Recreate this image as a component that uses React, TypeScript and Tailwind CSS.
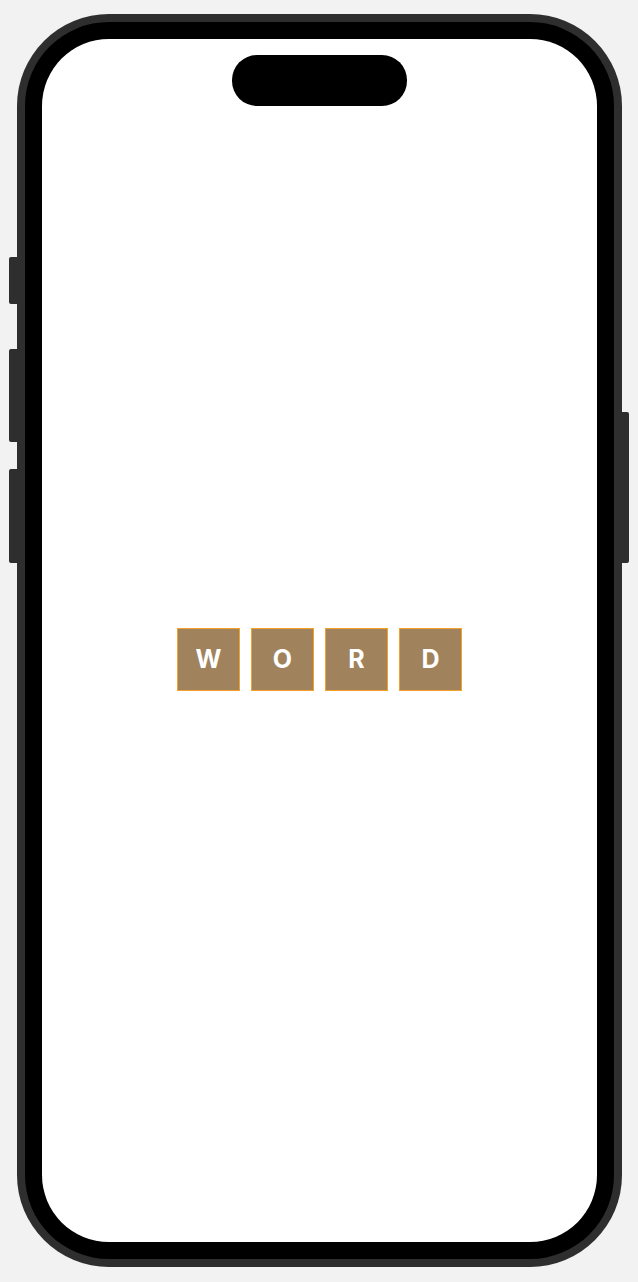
const letters = ['W', 'O', 'R', 'D']

function Tile({ letter }: { letter: string }) {
  return (
    <div className="w-[63px] h-[63px] bg-[#a0835d] border border-[#f5a028] flex items-center justify-center">
      <span className="text-white text-[25px] font-bold leading-none font-['Inter',sans-serif]">{letter}</span>
    </div>
  )
}

export default function App() {
  return (
    <div className="w-[638px] h-[1282px] bg-[#f2f2f2] relative overflow-hidden">
      {/* side buttons */}
      <div className="absolute left-[9px] top-[257px] w-[8px] h-[47px] bg-[#2e2e2e] rounded-l-[2px]" />
      <div className="absolute left-[9px] top-[349px] w-[8px] h-[93px] bg-[#2e2e2e] rounded-l-[2px]" />
      <div className="absolute left-[9px] top-[469px] w-[8px] h-[94px] bg-[#2e2e2e] rounded-l-[2px]" />
      <div className="absolute left-[621px] top-[412px] w-[8px] h-[151px] bg-[#2e2e2e] rounded-r-[2px]" />

      {/* phone body */}
      <div className="absolute left-[17px] top-[14px] w-[605px] h-[1253px] rounded-[92px] bg-[#2e2e2e] p-[8px]">
        <div className="w-full h-full rounded-[84px] bg-black p-[17px]">
          <div className="w-full h-full rounded-[67px] bg-white flex flex-col items-center">
            <div className="mt-[16px] w-[175px] h-[51px] rounded-[25px] bg-black" />
            <div className="flex-1 w-full flex items-center justify-center pb-[30px]">
              <div className="flex gap-[11px]">
                {letters.map((l) => (
                  <Tile key={l} letter={l} />
                ))}
              </div>
            </div>
          </div>
        </div>
      </div>
    </div>
  )
}
